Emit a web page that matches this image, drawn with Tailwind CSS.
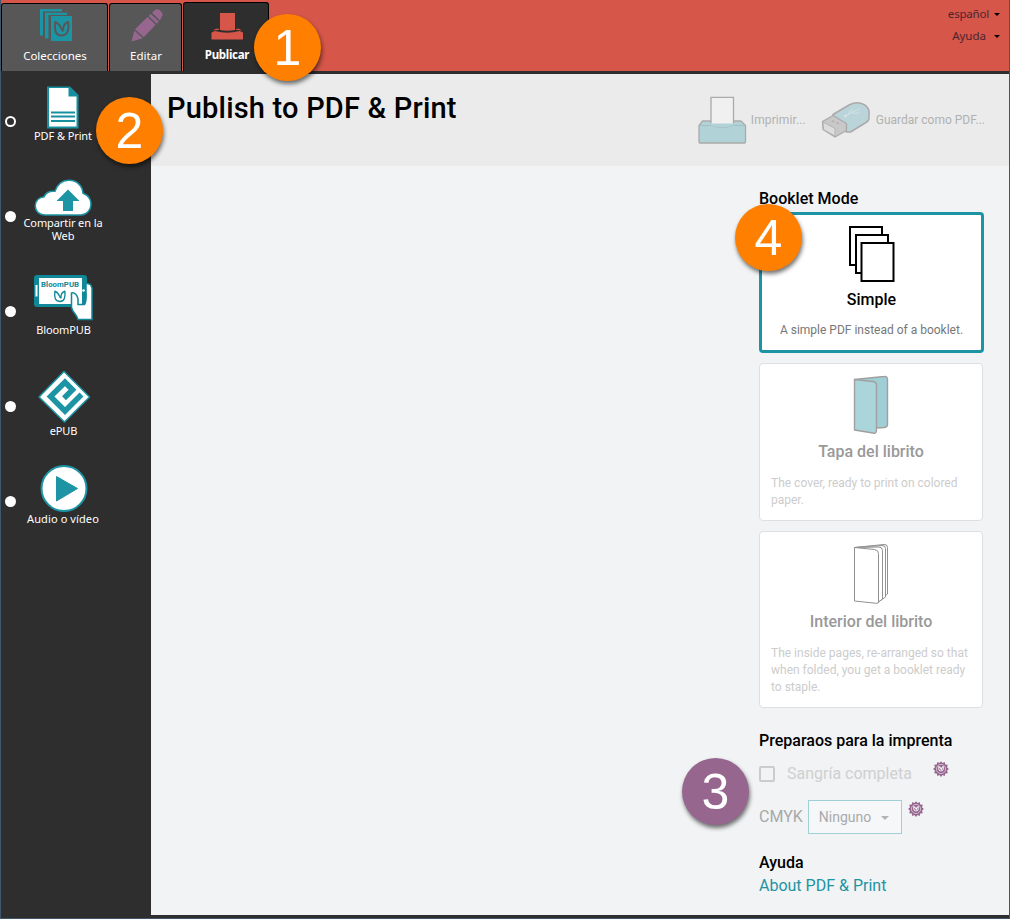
<!DOCTYPE html>
<html lang="es">
<head>
<meta charset="utf-8">
<title>Publicar</title>
<script src="https://cdn.jsdelivr.net/npm/@tailwindcss/browser@4"></script>
</head>
<body class="w-[1010px] h-[919px] overflow-hidden font-['Roboto',sans-serif]">
<svg width="0" height="0" class="absolute">
  <defs>
    <g id="leaf" fill="none" stroke-linecap="round" stroke-linejoin="round">
      <path d="M1.200 1C.2 8 1 14.500 7.500 14.500S15.200 8 14.300 1C10.500 2 9 5 9.200 9.500 7.500 11 7.300 3 1.200 1z"/>
    </g>
    <g id="seal">
      <path fill="#96668f" d="M8 .2l1.500 1.900L11.700 1l.5 2.600 2.600.2-.8 2.400L15.900 8l-1.900 1.700.8 2.500-2.600.3-.5 2.500-2.200-1L8 15.900l-1.500-1.900-2.200 1-.5-2.500-2.600-.3.800-2.500L.1 8 2 6.200l-.8-2.400 2.600-.2L4.300 1l2.200 1.100z"/>
      <circle cx="8" cy="8" r="4.600" fill="none" stroke="#e6dce6" stroke-width=".7"/>
      <use href="#leaf" transform="translate(5.400 5.100) scale(.34)" stroke="#f1f3f4" stroke-width="3"/>
    </g>
  </defs>
</svg>
<div class="relative flex flex-col w-full h-full bg-[#2e2e2e] border-x border-b border-[#40566a]">
  <header class="flex h-[74px] bg-[#d65649] border-b-[3px] border-[#2e2e2e] shrink-0">
    <nav class="flex items-end font-['Noto_Sans',sans-serif] text-[11.500px] text-white">
      <div class="flex flex-col items-center w-[107px] h-[68px] bg-[#575757] border-t border-x border-black rounded-t-[3px]">
        <svg class="mt-[5px] ml-[2px]" width="34" height="33" viewBox="0 0 34 33">
          <path fill="#1d94a4" d="M1 0h22v2.500H4v24H1z M6 3.700h22v2.300H9.500v23.500H6z"/>
          <path fill="#1d94a4" d="M12 7h21v25H12z"/>
          <use href="#leaf" transform="translate(15 12)" stroke="#575757" stroke-width="2"/>
        </svg>
        <span class="mt-[6px] ml-px leading-4">Colecciones</span>
      </div>
      <div class="flex flex-col items-center w-[73px] h-[68px] ml-[1px] bg-[#575757] border-t border-x border-black rounded-t-[3px]">
        <svg class="mt-[5px] ml-[2px]" width="34" height="33" viewBox="0 0 34 33">
          <g fill="#96668f">
            <path d="M4.300 21.500l8.500 7.800L1.500 32.500z"/>
            <path d="M5 20.200L17.500 8l8.200 7.700L13.700 28.200z"/>
            <path d="M18.600 7l2.200-2.100 8.100 7.700-2.200 2.100z"/>
            <path d="M22 3.800L24.800 1.200c1.700-1.500 3.600-1.200 5 .1l1.700 1.700c1.500 1.500 1.500 3.700 0 5.200L29.900 11.500z"/>
          </g>
        </svg>
        <span class="mt-[6px] ml-px leading-4">Editar</span>
      </div>
      <div class="flex flex-col items-center w-[86px] h-[69px] ml-[1px] bg-[#2e2e2e] border-t border-x border-black rounded-t-[3px]">
        <svg class="mt-[10px] ml-[2px]" width="32" height="28" viewBox="0 0 32 28">
          <path fill="#d65649" d="M9 0h15v17q-7.500 1.500-15 0z M.5 26.500V19.500l3.500-1.600Q16 21.500 28.500 17.900l3.500 1.600V26.500z M2 17.500L5 15.700h3v1.100z M31 17.500l-3-1.800h-3v1.100z"/>
        </svg>
        <span class="mt-[6px] ml-[2px] leading-4 font-bold text-[11.500px] tracking-[-0.3px]">Publicar</span>
      </div>
    </nav>
    <div class="flex flex-col ml-auto mr-[9px] pt-[5px] items-end font-['Noto_Sans',sans-serif] text-[11.500px] text-[#4a2530]">
      <div class="flex items-center h-[18px] gap-[5px]"><span class="tracking-[-0.2px]">español</span><i class="border-x-[3px] border-t-[3px] border-x-transparent border-t-black"></i></div>
      <div class="flex items-center h-[18px] mt-[4px] gap-[8px]"><span>Ayuda</span><i class="border-x-[3px] border-t-[3px] border-x-transparent border-t-black"></i></div>
    </div>
  </header>

  <div class="flex grow min-h-0">
    <aside class="w-[150px] shrink-0 text-white font-['Noto_Sans',sans-serif] text-[11px] leading-[13px] tracking-[-0.1px]">
      <div class="flex h-[95px] items-center pl-[4px]">
        <span class="w-[11px] h-[11px] rounded-full border-2 border-white"></span>
        <div class="flex flex-col items-center self-start w-[94px] mt-[12px]">
          <svg width="34" height="43" viewBox="0 0 34 43">
            <path fill="#1690a0" d="M1 .5h23L32.500 9v33.500H1z"/>
            <path fill="#fff" d="M3 2h19.500v8.500h8V40.500H3z"/>
            <path stroke="#1690a0" stroke-width="2" d="M5 26.500h24M5 30.500h24M5 35h24" />
          </svg>
          <span>PDF &amp; Print</span>
        </div>
      </div>
      <div class="flex h-[95px] items-center pl-[4px]">
        <span class="w-[11px] h-[11px] rounded-full bg-white"></span>
        <div class="flex flex-col items-center self-start w-[94px] mt-[10px]">
          <svg width="58" height="37" viewBox="0 0 58 37">
            <path fill="#fff" stroke="#1d94a4" stroke-width="1.500" d="M11 36C5 36 1.300 32 1.300 27c0-5 3.600-9 9-9.300C11 14.500 15 11.500 21 12.300 23.500 5 29 1 35.500 1.300 43 1.500 48.500 7 49 14.300c5 2 8 5.700 8 11C57 31 52.500 36 47 36z"/>
            <path fill="#1d94a4" d="M34 10.500L45.500 22H39v10H29V22h-6.500z"/>
          </svg>
          <span class="text-center w-[86px]">Compartir en la Web</span>
        </div>
      </div>
      <div class="flex h-[95px] items-center pl-[4px]">
        <span class="w-[11px] h-[11px] rounded-full bg-white"></span>
        <div class="flex flex-col items-center self-start w-[94px] mt-[11px]">
          <svg width="60" height="48" viewBox="0 0 60 48">
            <rect x="1" y="0" width="53" height="32" rx="3" fill="#108898"/>
            <rect x="6" y="3" width="43" height="26" fill="#fff"/>
            <path stroke="#fff" stroke-width="2" d="M3.500 10v11.500"/>
            <path fill="#fff" stroke="#108898" stroke-width="1.500" d="M38.500 18c3-.8 6 2 6.500 6v5.500h6.500c1.500-2 1.800-9 1.500-13.500v-8l4.500 1.500 1.500 3.500v31.500H45c-1-5-5.500-7-6.500-12z"/>
            <circle cx="50.500" cy="15.500" r="1.300" fill="#fff"/>
            <text x="8" y="12" font-family="Roboto, sans-serif" font-weight="700" font-size="7.800" textLength="38" fill="#108898">BloomPUB</text>
            <use href="#leaf" transform="translate(21 15.500) scale(.76)" stroke="#108898" stroke-width="1.800"/>
          </svg>
          <span class="ml-px">BloomPUB</span>
        </div>
      </div>
      <div class="flex h-[95px] items-center pl-[4px]">
        <span class="w-[11px] h-[11px] rounded-full bg-white"></span>
        <div class="flex flex-col items-center self-start w-[94px] mt-[11px]">
          <svg class="ml-px" width="54" height="54" viewBox="0 0 54 54">
            <path fill="#fff" stroke="#1d94a4" stroke-width="1.500" stroke-linejoin="round" d="M27 1.500L52.500 27 27.500 52 2 27z"/>
            <path fill="none" stroke="#1d94a4" stroke-width="5.500" d="M44.500 24.500L28 41 13.500 26.500 28 12.200 35.500 19.700 27 28.200"/>
          </svg>
          <span class="ml-px">ePUB</span>
        </div>
      </div>
      <div class="flex h-[95px] items-center pl-[4px]">
        <span class="w-[11px] h-[11px] rounded-full bg-white"></span>
        <div class="flex flex-col items-center self-start w-[94px] mt-[11px]">
          <svg class="ml-px" width="48" height="47" viewBox="0 0 48 47">
            <circle cx="24" cy="23.500" r="22.500" fill="#fff" stroke="#1d94a4" stroke-width="2"/>
            <path fill="#1d94a4" stroke="#1d94a4" stroke-linejoin="round" d="M16.500 11.500L37.500 23.500 16.500 36z"/>
          </svg>
          <span class="tracking-[0.1px]">Audio o vídeo</span>
        </div>
      </div>
    </aside>

    <main class="flex flex-col grow bg-[#f1f3f4] mb-[3px]">
      <div class="flex h-[92px] bg-[#ebebeb] pl-[16px] shrink-0">
        <h1 class="mt-[16px] text-[29px] leading-9 font-medium text-black tracking-[0.2px] whitespace-nowrap">Publish to PDF &amp; Print</h1>
        <div class="flex items-center ml-auto mr-[24px] text-[12px] text-[#b1b1b1]">
          <svg width="49" height="48" viewBox="0 0 49 48">
            <path fill="#b1d2d6" stroke="#aaa" stroke-width="1.300" stroke-linejoin="round" d="M1 29.500L4.500 25h38.500l4.500 4.500V46q0 1-1 1H2q-1 0-1-1z"/>
            <path fill="none" stroke="#a3bfc2" d="M1.500 29.500H14q10 4 21 0h12"/>
            <path fill="#f0f0f0" stroke="#aaa" stroke-width="1.300" d="M13 27.500V1.300h22.500V27.500"/>
            <path fill="#b1d2d6" d="M13 28h22.500v1.500Q24 33 13 29.500z"/>
          </svg>
          <span class="ml-[4px] whitespace-nowrap tracking-[0.1px]">Imprimir...</span>
          <svg class="ml-[15px]" width="50" height="38" viewBox="0 0 50 38">
            <path fill="#bad4d9" stroke="#aaa" stroke-width="1.500" stroke-linejoin="round" d="M12 17.500V13.500L28 4q8-4 15-.5 5.500 3.500 5 8.500v5q0 3-3 4.500L29.500 31h-4z"/>
            <path fill="#c8c8c8" stroke="#aaa" stroke-linejoin="round" stroke-width="1.300" d="M1.500 20.500L12 14.500 25.500 22.500v7L14 36 2 28.500z"/>
            <path fill="#ddd" stroke="#b5b5b5" stroke-width="1" d="M2 21l12 6.500V35L2.500 28.500z"/>
            <path stroke="#aaa" fill="none" stroke-width="1.300" d="M11 19.800l2 1.100M15.500 21.500l2 1.100"/>
            <path fill="none" stroke="#d3e3e6" d="M24 15L39 7.500M27 14l2-4 3-1.500M31 12l5 .5 2.500-1.500"/><circle cx="24.500" cy="15" r="1.500" fill="#d3e3e6"/>
          </svg>
          <span class="ml-[5px] whitespace-nowrap">Guardar como PDF...</span>
        </div>
      </div>
      <section class="flex flex-col w-[224px] ml-auto mr-[26px] pt-[23px] text-black">
        <h2 class="text-[16px] leading-5 font-medium pb-[3px]">Booklet Mode</h2>
        <div class="flex flex-col items-center w-[225px] h-[141px] bg-white border-[3px] border-[#1d94a4] rounded-[4px] pt-[10px]">
          <svg width="47" height="58" viewBox="0 0 47 58" fill="#fff" stroke="#000" stroke-width="2">
            <path d="M2 2h32v38H2z"/><path d="M8 10h32v38H8z"/><path d="M13.500 18h32v38h-32z"/>
          </svg>
          <span class="text-[16px] leading-5 mt-[7px] font-medium">Simple</span>
          <span class="text-[12px] leading-[17px] mt-[12px] text-[#777]">A simple PDF instead of a booklet.</span>
        </div>
        <div class="flex flex-col items-center h-[158px] mt-[10px] bg-white border border-[#dedfe0] rounded-[4px] pt-[11px]">
          <svg width="36" height="60" viewBox="0 0 36 60" stroke="#a0a0a0" stroke-width="1.400" stroke-linejoin="round">
            <path fill="#9fcfd5" d="M1.500 4.500L31 1.500q3.500-.5 3.500 3v45q0 2.500-3 3l-8 .5z"/>
            <path fill="#a9d5db" d="M1.500 4.500L20 6.500q3.500.5 3.500 4V54q0 4.500-2 4.200L1.500 55z"/>
          </svg>
          <span class="text-[16px] leading-5 mt-[7px] font-medium text-[#999]">Tapa del librito</span>
          <p class="w-full px-[11px] text-[12px] leading-[17px] mt-[13px] text-[#ccc]">The cover, ready to print on colored paper.</p>
        </div>
        <div class="flex flex-col items-center h-[177px] mt-[10px] bg-white border border-[#dedfe0] rounded-[4px] pt-[11px]">
          <svg width="36" height="61" viewBox="0 0 36 61" fill="#fff" stroke="#909090" stroke-width="1" stroke-linejoin="round">
            <path d="M1.500 4.500L31 1.500q3.500-.5 3.500 3V51L24 60z"/>
            <path d="M1.500 4.500L29 2.500q3.500-.2 3.500 3V54L24 60z"/>
            <path d="M1.500 4.500L26 4q3.500.2 3.500 3.500V56L24 60z"/>
            <path d="M1.500 4.500L21.500 6.500Q25.500 7 25.500 10.500V59q0 1.500-2 1.300L1.500 58z"/>
          </svg>
          <span class="text-[16px] leading-5 mt-[8px] font-medium text-[#999]">Interior del librito</span>
          <p class="w-full px-[11px] text-[12px] leading-[17px] mt-[13px] text-[#ccc]">The inside pages, re-arranged so that when folded, you get a booklet ready to staple.</p>
        </div>
        <h2 class="text-[16px] leading-5 font-medium mt-[23px] whitespace-nowrap">Preparaos para la imprenta</h2>
        <div class="flex h-[32px] mt-[7px] items-center">
          <span class="w-[16px] h-[16px] border-2 border-[#ccc] rounded-[2px]"></span>
          <span class="ml-[12px] w-[125px] text-[16px] text-[#cfd0d1] whitespace-nowrap">Sangría completa</span>
          <svg class="ml-[21px] mb-[10px]" width="16" height="16" viewBox="0 0 16 16"><use href="#seal"/></svg>
        </div>
        <div class="flex h-[34px] mt-[10px] items-center">
          <span class="text-[16px] text-[#a8a9aa]">CMYK</span>
          <div class="flex items-center justify-between w-[94px] h-[34px] ml-[5px] pl-[10px] pr-[12px] border border-[#9fd0d6] bg-[#f6f7f9] text-[14px] text-[#a9aaab]"><span>Ninguno</span><i class="border-x-[4px] border-t-[4px] border-x-transparent border-t-[#b3b3b3] mt-[2px]"></i></div>
          <svg class="ml-[6px] mb-[16px]" width="16" height="16" viewBox="0 0 16 16"><use href="#seal"/></svg>
        </div>
        <h2 class="text-[16px] leading-5 font-medium mt-[19px]">Ayuda</h2>
        <a class="text-[16px] leading-5 mt-[3px] text-[#1d94a4]">About PDF &amp; Print</a>
      </section>
    </main>
  </div>
</div>

<!-- numbered callouts over the window -->
<div class="absolute left-[254px] top-[14px] w-[67px] h-[67px] rounded-full bg-[#ff8000] shadow-[1px_3px_4px_rgba(0,0,0,0.55)] flex items-center justify-center text-white text-[50px] leading-none font-['Liberation_Sans',sans-serif]">1</div>
<div class="absolute left-[96px] top-[97px] w-[67px] h-[67px] rounded-full bg-[#ff8000] shadow-[1px_3px_4px_rgba(0,0,0,0.55)] flex items-center justify-center text-white text-[50px] leading-none font-['Liberation_Sans',sans-serif]">2</div>
<div class="absolute left-[682px] top-[758px] w-[67px] h-[67px] rounded-full bg-[#96668f] shadow-[1px_3px_4px_rgba(0,0,0,0.55)] flex items-center justify-center text-white text-[50px] leading-none font-['Liberation_Sans',sans-serif]">3</div>
<div class="absolute left-[735px] top-[204px] w-[67px] h-[67px] rounded-full bg-[#ff8000] shadow-[1px_3px_4px_rgba(0,0,0,0.55)] flex items-center justify-center text-white text-[50px] leading-none font-['Liberation_Sans',sans-serif]">4</div>
</body>
</html>
